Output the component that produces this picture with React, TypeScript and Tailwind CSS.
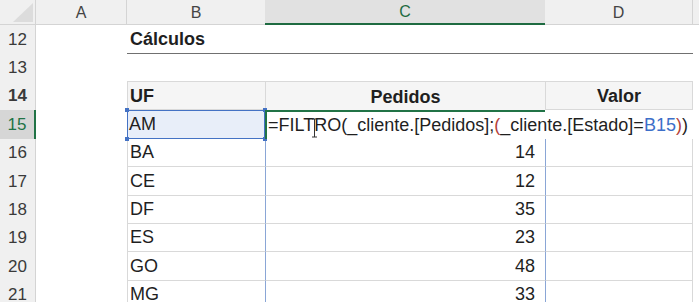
import React from "react";

const GRID = "border-[#d9d9d9]";

function RowHead({ n, active }: { n: number; active?: boolean }) {
  return (
    <div
      className={
        "w-[36px] shrink-0 flex items-center justify-center text-[17px] " +
        (active
          ? "bg-[#d6d6d6] text-[#217346] border-r-2 border-[#217346]"
          : "bg-[#f0f0f0] text-[#3a3a3a] border-r border-[#d4d4d4]")
      }
    >
      {n}
    </div>
  );
}

function ColA() {
  return <div className="w-[91px] shrink-0 bg-white" />;
}

function Rest() {
  return <div className="flex-1 bg-white" />;
}

export default function App() {
  const data: [number, string, string, number][] = [
    [16, "BA", "14", 28],
    [17, "CE", "12", 29],
    [18, "DF", "35", 28],
    [19, "ES", "23", 28],
    [20, "GO", "48", 29],
    [21, "MG", "33", 28],
  ];

  return (
    <div className="w-[699px] h-[302px] overflow-hidden bg-white font-['Liberation_Sans',Arial,sans-serif] text-[18px] text-[#1f1f1f]">
      {/* Column headers */}
      <div className="flex h-[25px] text-[16px] text-[#444]">
        <div className="w-[36px] shrink-0 bg-[#f0f0f0] border-r border-b border-[#d4d4d4] relative">
          <svg className="absolute left-0 top-0" width="36" height="25" viewBox="0 0 36 25">
            <polygon points="33,3 33,22 13,22" fill="#dcdcdc" />
          </svg>
        </div>
        <div className="w-[91px] shrink-0 bg-[#f0f0f0] border-r border-b border-[#d4d4d4] flex items-center justify-center pt-[1px]">
          A
        </div>
        <div className="w-[138px] shrink-0 bg-[#f0f0f0] border-b border-[#d4d4d4] flex items-center justify-center pt-[1px]">
          B
        </div>
        <div className="w-[280px] shrink-0 bg-[#e1e1e1] border-b-2 border-[#1e6b41] flex items-center justify-center pt-[1px] text-[#1e6b41]">
          C
        </div>
        <div className="w-[148px] shrink-0 bg-[#f0f0f0] border-r border-b border-[#d4d4d4] flex items-center justify-center pt-[1px]">
          D
        </div>
        <div className="flex-1 bg-[#f0f0f0] border-b border-[#d4d4d4]" />
      </div>

      {/* Row 12 */}
      <div className="flex h-[29px]">
        <RowHead n={12} />
        <ColA />
        <div className="w-[566px] shrink-0 border-b border-[#707070] flex items-center pl-[3px] font-bold">
          Cálculos
        </div>
        <Rest />
      </div>

      {/* Row 13 */}
      <div className="flex h-[28px]">
        <RowHead n={13} />
        <ColA />
        <div className={"w-[566px] shrink-0 border-b " + GRID} />
        <Rest />
      </div>

      {/* Row 14 */}
      <div className="flex h-[28px] font-bold">
        <RowHead n={14} />
        <ColA />
        <div className={"w-[138px] shrink-0 bg-[#f5f5f5] border-l border-b flex items-center pl-[2px] pt-[2px] " + GRID}>
          UF
        </div>
        <div className={"w-[280px] shrink-0 bg-[#f5f5f5] border-l flex items-center justify-center pt-[2px] " + GRID}>
          Pedidos
        </div>
        <div className={"w-[148px] shrink-0 bg-[#f5f5f5] border-l border-r border-b flex items-center justify-center pt-[2px] " + GRID}>
          Valor
        </div>
        <Rest />
      </div>

      {/* Row 15 */}
      <div className="flex h-[29px]">
        <RowHead n={15} active />
        <ColA />
        <div className="w-[138px] shrink-0 bg-[#e8eef9] flex items-center pl-[2px] relative">
          AM
          <div className="absolute inset-0 border border-[#4472c4] pointer-events-none" />
          <div className="absolute -left-[2px] -top-[2px] w-[4px] h-[4px] bg-[#4472c4]" />
          <div className="absolute -right-[2px] -top-[2px] w-[4px] h-[4px] bg-[#4472c4]" />
          <div className="absolute -left-[2px] -bottom-[2px] w-[4px] h-[4px] bg-[#4472c4]" />
          <div className="absolute -right-[2px] -bottom-[2px] w-[4px] h-[4px] bg-[#4472c4]" />
        </div>
        <div className="w-[280px] shrink-0 border-l-2 border-t-2 border-[#217346] flex items-center pl-[1px] relative z-10 overflow-visible">
          <span className="whitespace-nowrap bg-white pr-[3px]">
            =FILTRO(_cliente.[Pedidos];
            <span className="text-[#b4423a]">(</span>
            _cliente.[Estado]=
            <span className="text-[#3d6fc9]">B15</span>
            <span className="text-[#b4423a]">)</span>)
          </span>
          <svg className="absolute left-[44px] top-[6px]" width="7" height="20" viewBox="0 0 7 20">
            <path d="M1 1 H6 M3.5 1 V19 M1 19 H6" stroke="#333" strokeWidth="1" fill="none" />
          </svg>
        </div>
        <div className="w-[148px] shrink-0 bg-white" />
        <Rest />
      </div>

      {/* Rows 16-21 */}
      {data.map(([n, uf, ped, h]) => (
        <div key={n} className="flex" style={{ height: h }}>
          <RowHead n={n} />
          <ColA />
          <div className={"w-[138px] shrink-0 border-l border-b flex items-center pl-[2px] " + GRID}>
            {uf}
          </div>
          <div className="w-[280px] shrink-0 border-l border-b border-l-[#8aa6d6] border-b-[#d9d9d9] flex items-center justify-end pr-[10px]">
            {ped}
          </div>
          <div className="w-[148px] shrink-0 border-l border-r border-b border-l-[#8aa6d6] border-r-[#d9d9d9] border-b-[#d9d9d9]" />
          <Rest />
        </div>
      ))}
    </div>
  );
}
